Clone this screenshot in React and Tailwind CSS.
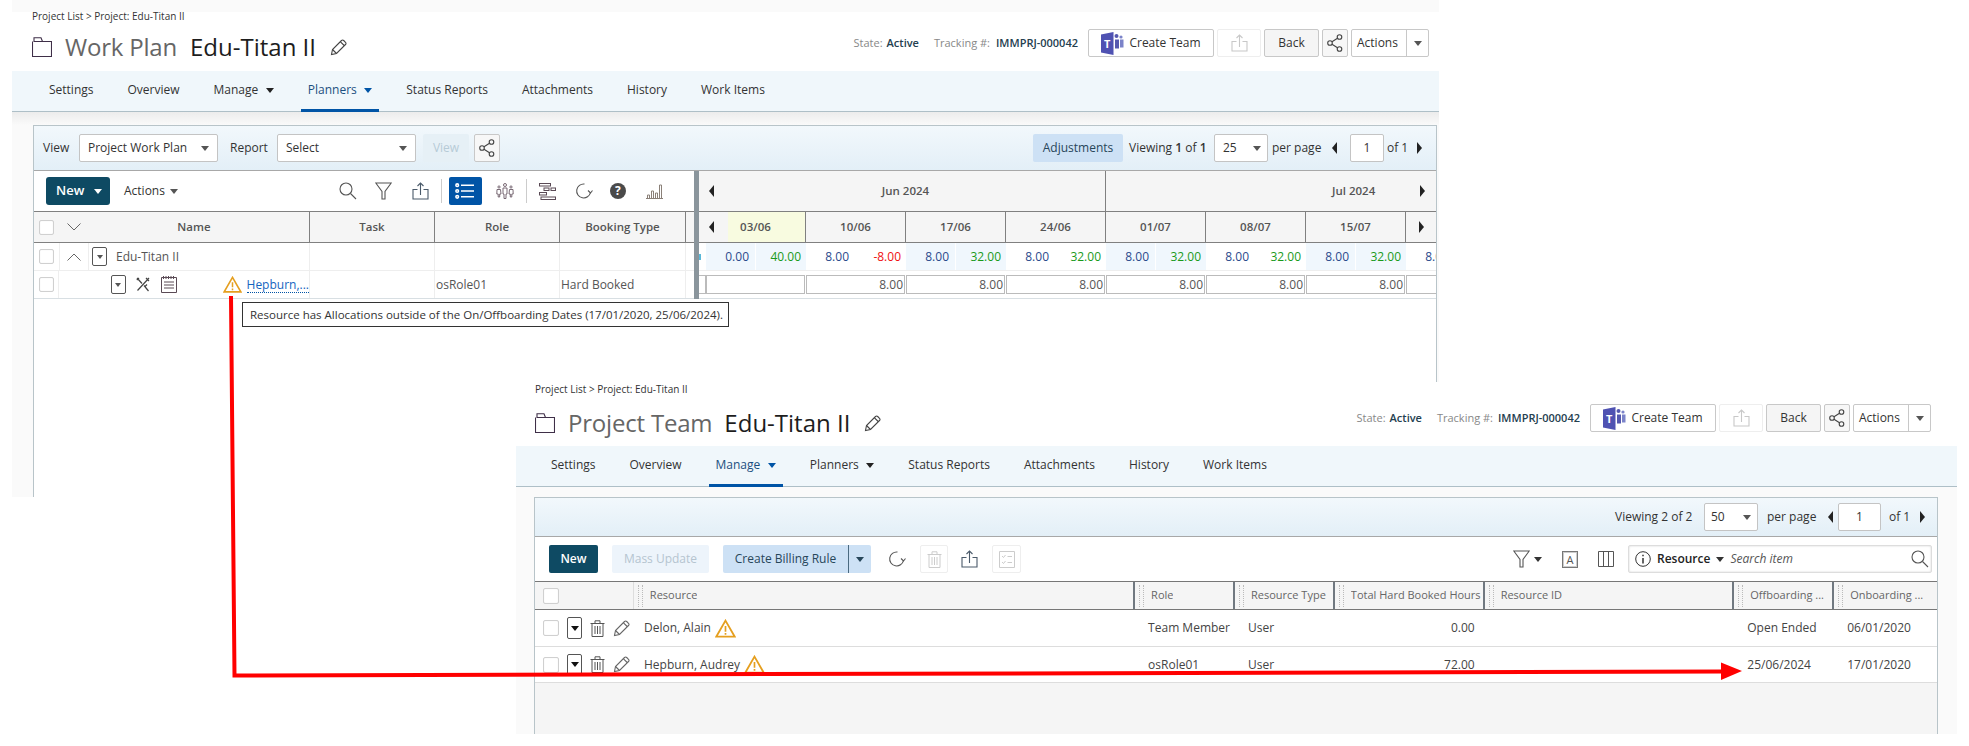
import React from 'react';

const Folder = () => (
  <svg width="20" height="20" viewBox="0 0 20 20" fill="none" stroke="#3f2f48" strokeWidth="1.1">
    <path d="M0.5 4.5V19.5H19.5V4.5H10.5L9 0.8H2V4.5H10.5" />
  </svg>
);

const Pencil = ({ color = '#444' }) => (
  <svg width="17" height="17" viewBox="0 0 17 17" fill="none" stroke={color} strokeWidth="1.1">
    <path d="M1.5 15.5L2.5 10.5L11.5 1.5C12.3 0.8 13 0.8 13.7 1.5L15.5 3.3C16.2 4 16.2 4.8 15.5 5.5L6.5 14.5L1.5 15.5Z" />
    <path d="M10.5 2.8L14.2 6.5M2.5 10.5L6.5 14.5" />
  </svg>
);

const Nodes = () => (
  <svg width="16" height="18" viewBox="0 0 16 18" fill="none" stroke="#444" strokeWidth="1.1">
    <circle cx="12.5" cy="3" r="2.3" />
    <circle cx="3" cy="9" r="2.3" />
    <circle cx="12.5" cy="15" r="2.3" />
    <path d="M10.5 4.3L5 7.7M5 10.3L10.5 13.7" />
  </svg>
);

const Upload = ({ color = '#4a5a6a' }) => (
  <svg width="17" height="18" viewBox="0 0 17 18" fill="none" stroke={color} strokeWidth="1.1">
    <path d="M5.5 7.5H1V17H16V7.5H11.5" />
    <path d="M8.5 13V1M5.5 4L8.5 1L11.5 4" />
  </svg>
);

const Teams = () => (
  <svg width="23" height="23" viewBox="0 0 23 23">
    <circle cx="15.5" cy="4" r="2" fill="#5558af" />
    <circle cx="20" cy="5" r="1.6" fill="#7b83c9" />
    <rect x="14" y="7.5" width="4" height="9" fill="#5558af" />
    <rect x="19" y="7.5" width="3.5" height="8" fill="#7b83c9" />
    <path d="M0 2.5L12.5 0V23L0 20.5Z" fill="#4f52b2" />
    <text x="6.2" y="15.5" fontSize="11" fontWeight="700" fill="#fff" textAnchor="middle" fontFamily="Open Sans">T</text>
  </svg>
);

const Down = ({ className = 'border-t-[#555]', w = 'border-x-[4px] border-t-[5px]' }) => (
  <span className={`inline-block h-0 w-0 border-x-transparent ${w} ${className}`} />
);

const ArrowL = () => <span className="inline-block h-0 w-0 border-y-[6px] border-r-[5px] border-y-transparent border-r-[#222]" />;
const ArrowR = () => <span className="inline-block h-0 w-0 border-y-[6px] border-l-[5px] border-y-transparent border-l-[#222]" />;

const Warn = ({ w = 19, h = 17 }) => (
  <svg width={w} height={h} viewBox="0 0 20 18" fill="none">
    <path d="M10 1.5L18.8 16.8H1.2Z" stroke="#e59f1f" strokeWidth="1.7" strokeLinejoin="miter" />
    <path d="M10 6.5V12M10 13.2V15" stroke="#e59f1f" strokeWidth="1.6" />
  </svg>
);

const Search = () => (
  <svg width="18" height="18" viewBox="0 0 18 18" fill="none" stroke="#555" strokeWidth="1.1">
    <circle cx="7" cy="7" r="6" />
    <path d="M11.5 11.5L17 17" />
  </svg>
);

const Funnel = () => (
  <svg width="17" height="18" viewBox="0 0 17 18" fill="none" stroke="#555" strokeWidth="1.1">
    <path d="M0.8 1H16.2L10 9.5V17H7V9.5Z" />
  </svg>
);

const Refresh = () => (
  <svg width="18" height="18" viewBox="0 0 18 18" fill="none" stroke="#555" strokeWidth="1.1">
    <path d="M15.5 10.5A7 7 0 1 1 9.5 2" />
    <path d="M13 8.5L15.5 11L17.5 8.5" />
  </svg>
);

const Trash = ({ color = '#555', w = 15, h = 17 }) => (
  <svg width={w} height={h} viewBox="0 0 15 17" fill="none" stroke={color} strokeWidth="1">
    <path d="M0.5 3.5H14.5M2 3.5V16.5H13V3.5M5 3.5V0.8H10V3.5M5 6V14M7.5 6V14M10 6V14" />
  </svg>
);

const ListIcon = () => (
  <svg width="20" height="16" viewBox="0 0 20 16" fill="none" stroke="#fff" strokeWidth="1.6">
    <circle cx="2.2" cy="2.2" r="1.3" />
    <circle cx="2.2" cy="8" r="1.3" />
    <circle cx="2.2" cy="13.8" r="1.3" />
    <path d="M6 2.2H19M6 8H19M6 13.8H19" />
  </svg>
);

const People = () => (
  <svg width="18" height="16" viewBox="0 0 18 16" fill="none" stroke="#6b5a66" strokeWidth="0.9">
    <circle cx="9" cy="2" r="1.5" />
    <path d="M7 5H11V11H10V15.5H8V11H7Z" />
    <circle cx="3" cy="4" r="1.1" />
    <path d="M1 6.5H4.5L5 11H3.7V14H2.2V11H0.8Z" />
    <circle cx="15" cy="4" r="1.1" />
    <path d="M13.5 6.5H17L17.2 11H15.8V14H14.3V11H13Z" />
  </svg>
);

const Gantt = () => (
  <svg width="17" height="17" viewBox="0 0 17 17" fill="none" stroke="#5a4a55" strokeWidth="1">
    <rect x="0.5" y="0.5" width="11" height="2.5" />
    <rect x="5" y="5" width="5" height="2.5" />
    <rect x="12" y="5" width="4.5" height="2.5" />
    <rect x="0.5" y="9.5" width="7" height="2.5" />
    <rect x="2" y="14" width="14.5" height="2.5" />
  </svg>
);

const Help = () => (
  <span className="flex h-[16px] w-[16px] items-center justify-center rounded-full bg-[#4a4a4a] text-[12px] leading-none font-bold text-white">?</span>
);

const Bars = () => (
  <svg width="17" height="15" viewBox="0 0 17 15" fill="none" stroke="#8a8078" strokeWidth="1">
    <path d="M0 14.5H17M1.5 14.5V11H3.5V14.5M5.5 14.5V7H7.5V14.5M9.5 14.5V9H11.5V14.5M13.5 14.5V1H15.5V14.5" />
  </svg>
);

const Tools = () => (
  <svg width="14" height="15" viewBox="0 0 14 15" fill="none" stroke="#444" strokeWidth="1.2">
    <path d="M1 1L6 6.5M8 8.5L12.5 14M13 1L1.5 13.5M10 1L13 4M0.8 3L3 1M9 9.5L11 7.5" />
  </svg>
);

const Notes = () => (
  <svg width="16" height="17" viewBox="0 0 16 17" fill="none" stroke="#5a4a55" strokeWidth="1">
    <path d="M0.5 1.5H15.5V16.5H0.5ZM2.5 0V3M5 0V3M7.5 0V3M10 0V3M12.5 0V3M3 6H13M3 9H13M3 12H13" />
  </svg>
);

const Check = ({ className = '' }) => (
  <span className={`inline-block h-[15px] w-[15px] rounded-[2px] border border-[#d0d0d0] bg-white shadow-[inset_0_0_1px_#ddd] ${className}`} />
);

const Select = ({ label, className }) => (
  <div className={`flex h-[28px] items-center justify-between rounded-[2px] border border-[#c4c4c4] bg-white text-[#333] ${className}`}>
    <span>{label}</span>
    <Down w="border-x-[4.5px] border-t-[5px]" />
  </div>
);

const SmallBtn = ({ className, children }) => (
  <div className={`flex h-[28px] items-center justify-center rounded-[2px] border ${className}`}>{children}</div>
);

const PageHeader = ({ title, titleGap, leftPad, rightPad, top, rowGap, btnOffset, stateMargin }) => (
  <div className={`h-full bg-white ${top}`}>
    <div className={`h-[12px] text-[10px] leading-[9px] text-[#333] ${leftPad}`}>Project List &gt; Project: Edu-Titan II</div>
    <div className={`flex items-start justify-between ${rowGap} ${leftPad} ${rightPad}`}>
      <div className="flex h-[28px] items-center">
        <Folder />
        <span className="ml-[13px] text-[24px] leading-none tracking-[-0.2px] text-[#666]">{title}</span>
        <span className={`text-[24px] leading-none text-[#1d1d1d] ${titleGap}`}>Edu-Titan II</span>
        <span className="ml-[14px]"><Pencil /></span>
      </div>
      <div className={`flex items-center text-[11px] ${btnOffset}`}>
        <span className="text-[#888]">State:</span>
        <span className="ml-[4px] font-semibold text-[#24404f]">Active</span>
        <span className="ml-[15px] text-[#888]">Tracking #:</span>
        <span className={`font-semibold text-[#24404f] ${stateMargin}`}>IMMPRJ-000042</span>
        <SmallBtn className="ml-[10px] w-[126px] border-[#c8c8c8] bg-white text-[12px] text-[#333]">
          <Teams />
          <span className="ml-[5px]">Create Team</span>
        </SmallBtn>
        <SmallBtn className="ml-[3px] w-[44px] border-[#eee] bg-white"><Upload color="#c8c8c8" /></SmallBtn>
        <SmallBtn className="ml-[3px] w-[55px] border-[#c8c8c8] bg-[#f5f5f5] text-[12px] text-[#333]">Back</SmallBtn>
        <SmallBtn className="ml-[3px] w-[26px] border-[#c8c8c8] bg-[#f7f7f7]"><Nodes /></SmallBtn>
        <div className="ml-[3px] flex h-[28px] w-[78px] items-center rounded-[2px] border border-[#c8c8c8] bg-white text-[12px] text-[#333]">
          <span className="w-[55px] border-r border-[#c8c8c8] pl-[5px] leading-[26px]">Actions</span>
          <span className="flex flex-1 justify-center"><Down /></span>
        </div>
      </div>
    </div>
  </div>
);

const Tabs = ({ active, className }) => {
  const tabs = [
    { name: 'Settings' },
    { name: 'Overview' },
    { name: 'Manage', caret: true },
    { name: 'Planners', caret: true },
    { name: 'Status Reports' },
    { name: 'Attachments' },
    { name: 'History' },
    { name: 'Work Items' },
  ];
  return (
    <div className={`flex h-[41px] gap-[20px] border-b border-[#aebfc7] bg-[#f0f7fb] text-[12px] text-[#333] ${className}`}>
      {tabs.map((t) => (
        <div
          key={t.name}
          className={`-mb-px flex items-center gap-[7.5px] px-[7px] ${t.name === active ? 'border-b-[3px] border-[#0054a6] text-[#1c4f80]' : 'pb-[3px]'}`}
        >
          <span>{t.name}</span>
          {t.caret && <Down className={t.name === active ? 'border-t-[#0054a6]' : 'border-t-[#222]'} />}
        </div>
      ))}
    </div>
  );
};

const weeks = ['03/06', '10/06', '17/06', '24/06', '01/07', '08/07', '15/07'];
const hours = [
  ['0.00', '40.00'],
  ['8.00', '-8.00'],
  ['8.00', '32.00'],
  ['8.00', '32.00'],
  ['8.00', '32.00'],
  ['8.00', '32.00'],
  ['8.00', '32.00'],
  ['8.00', ''],
];

const WorkPlan = () => (
  <div className="absolute top-0 left-[12px] flex h-[497px] w-[1427px] flex-col bg-[#fafafa] pt-[12px]">
    <div className="h-[59px] shrink-0">
      <PageHeader
        title="Work Plan"
        titleGap="ml-[13px]"
        leftPad="pl-[20px]"
        rightPad="pr-[10px]"
        top=""
        rowGap="mt-[9px]"
        btnOffset="-mt-[4px]"
        stateMargin="ml-[6px]"
      />
    </div>
    <Tabs active="Planners" className="pl-[30px]" />
    <div className="h-[13px] shrink-0 bg-gradient-to-b from-[#ececec] to-[#fafafa]" />
    <div className="ml-[21px] flex w-[1404px] flex-1 flex-col border-x border-t border-[#b8c4c9] bg-white text-[12px]">
      <div className="flex h-[45px] shrink-0 items-center border-b border-[#a8a8a8] bg-gradient-to-b from-[#f2f8fc] to-[#e3eff7] pl-[9px] text-[#333]">
        <span className="w-[36px]">View</span>
        <Select label="Project Work Plan" className="w-[139px] px-[8px]" />
        <span className="w-[59px] pl-[12px]">Report</span>
        <Select label="Select" className="w-[139px] px-[8px]" />
        <SmallBtn className="ml-[7px] w-[46px] border-transparent bg-[#e6f0f6] text-[#b6cbd6]">View</SmallBtn>
        <SmallBtn className="ml-[5px] w-[26px] border-[#c8c8c8] bg-[#f7f7f7]"><Nodes /></SmallBtn>
        <div className="ml-auto flex items-center pr-[14px]">
          <SmallBtn className="w-[90px] border-transparent bg-[#cde1f5] text-[#27465a]">Adjustments</SmallBtn>
          <span className="ml-[6px] w-[85px]">Viewing <b className="font-semibold">1</b> of <b className="font-semibold">1</b></span>
          <Select label="25" className="w-[54px] pr-[6px] pl-[8px]" />
          <span className="ml-[4px] w-[50px]">per page</span>
          <span className="ml-[10px] flex"><ArrowL /></span>
          <div className="ml-[13px] flex h-[28px] w-[34px] items-center justify-center rounded-[2px] border border-[#c4c4c4] bg-white">1</div>
          <span className="ml-[3px] w-[26px]">of 1</span>
          <span className="ml-[4px] flex"><ArrowR /></span>
        </div>
      </div>
      <div className="flex">
        <div className="w-[660px] shrink-0">
          <div className="flex h-[40px] items-center pl-[12px]">
            <div className="flex h-[28px] w-[64px] items-center rounded-[3px] bg-[#0e4a63] pl-[10px] text-[13px] font-semibold text-white">
              New
              <span className="ml-[10px] flex"><Down className="border-t-white" /></span>
            </div>
            <span className="ml-[14px] text-[#333]">Actions</span>
            <span className="ml-[5px] flex"><Down /></span>
            <span className="ml-[161px] flex"><Search /></span>
            <span className="ml-[18px] flex"><Funnel /></span>
            <span className="ml-[20px] flex"><Upload /></span>
            <span className="ml-[12px] h-[24px] w-px bg-[#ccc]" />
            <div className="ml-[7px] flex h-[28px] w-[33px] items-center justify-center rounded-[2px] bg-[#0054a6]"><ListIcon /></div>
            <span className="ml-[14px] flex"><People /></span>
            <span className="ml-[12px] h-[24px] w-px bg-[#ccc]" />
            <span className="ml-[12px] flex"><Gantt /></span>
            <span className="ml-[19px] flex"><Refresh /></span>
            <span className="ml-[17px] flex"><Help /></span>
            <span className="ml-[20px] flex"><Bars /></span>
          </div>
          <div className="flex h-[32px] border-y border-[#808080] bg-[#f5f5f5] text-[11.5px] font-semibold text-[#555]">
            <div className="relative flex w-[276px] items-center border-r border-[#808080]">
              <Check className="ml-[5px]" />
              <svg className="ml-[13px]" width="14" height="8" viewBox="0 0 14 8" fill="none" stroke="#666"><path d="M0.5 0.5L7 7L13.5 0.5" /></svg>
              <span className="ml-[68px] w-[90px] text-center">Name</span>
            </div>
            <div className="flex w-[125px] items-center justify-center border-r border-[#808080]">Task</div>
            <div className="flex w-[125px] items-center justify-center border-r border-[#808080]">Role</div>
            <div className="flex w-[126px] items-center justify-center border-r border-[#808080]">Booking Type</div>
          </div>
          <div className="flex h-[28px] border-b border-[#eee] text-[#555]">
            <div className="flex w-[276px] items-center border-r border-[#eee]">
              <span className="flex h-full w-[26px] items-center border-r border-[#eee]"><Check className="ml-[5px]" /></span>
              <span className="flex h-full w-[29px] items-center justify-center border-r border-[#eee]">
                <svg width="14" height="8" viewBox="0 0 14 8" fill="none" stroke="#666"><path d="M0.5 7.5L7 1L13.5 7.5" /></svg>
              </span>
              <span className="ml-[3px] flex h-[19px] w-[15px] items-center justify-center rounded-[2px] border border-[#555]"><Down w="border-x-[3px] border-t-[4px]" /></span>
              <span className="ml-[9px]">Edu-Titan II</span>
            </div>
            <div className="w-[125px] border-r border-[#eee]" />
            <div className="w-[125px] border-r border-[#eee]" />
            <div className="w-[126px] border-r border-[#eee]" />
          </div>
          <div className="flex h-[28px] border-b border-[#d8dfe3] text-[#555]">
            <div className="flex w-[276px] items-center border-r border-[#eee]">
              <span className="flex h-full w-[26px] items-center border-r border-[#eee]"><Check className="ml-[5px]" /></span>
              <span className="ml-[52px] flex h-[19px] w-[15px] items-center justify-center rounded-[2px] border border-[#555]"><Down w="border-x-[3px] border-t-[4px]" /></span>
              <span className="ml-[10px] flex"><Tools /></span>
              <span className="ml-[11px] flex"><Notes /></span>
              <span className="ml-[46px] flex"><Warn /></span>
              <span className="ml-[5px] border-b border-dotted border-[#0054a6] leading-[15px] text-[#1565c0]">Hepburn,...</span>
            </div>
            <div className="w-[125px] border-r border-[#eee]" />
            <div className="flex w-[125px] items-center border-r border-[#eee] pl-[1px]">osRole01</div>
            <div className="flex w-[126px] items-center border-r border-[#eee] pl-[1px]">Hard Booked</div>
          </div>
        </div>
        <div className="w-[5px] shrink-0 bg-[#8a959c]" />
        <div className="w-[737px] overflow-hidden text-[#555]">
          <div className="flex h-[40px] bg-[#f5f5f5] pl-[7px] text-[11.5px] font-semibold">
            <div className="relative flex w-[400px] shrink-0 items-center justify-center border-r border-[#808080]">
              Jun 2024
              <span className="absolute left-[3px] flex"><ArrowL /></span>
            </div>
            <div className="relative flex flex-1 items-center pl-[226px]">
              Jul 2024
              <span className="absolute right-[11px] flex"><ArrowR /></span>
            </div>
          </div>
          <div className="flex h-[32px] border-y border-[#808080] bg-[#f5f5f5] pl-[7px] text-[11.5px] font-semibold">
            {weeks.map((w, i) => (
              <div key={w} className={`relative flex w-[100px] shrink-0 items-center justify-center border-r border-[#808080] ${i === 0 ? 'bg-[#f8fbe0]' : ''}`}>
                {i === 0 && <span className="absolute inset-y-0 left-0 flex w-[22px] items-center bg-[#f5f5f5] pl-[3px]"><ArrowL /></span>}
                {w}
              </div>
            ))}
            <div className="flex flex-1 items-center pl-[13px]"><ArrowR /></div>
          </div>
          <div className="flex h-[28px] border-b border-[#eee]">
            <span className="flex w-[7px] shrink-0 items-center"><span className="h-[6px] w-[2px] bg-[#5ab8d8]" /></span>
            {hours.map((h, i) => (
              <div key={i} className={`flex w-[100px] shrink-0 items-center ${i % 2 === 0 ? 'bg-[#f0f7fd]' : 'bg-white'}`}>
                <span className="h-full w-[50px] border-r border-white pr-[6px] text-right leading-[27px] text-[#2a4a8c]">{h[0]}</span>
                <span className={`w-[50px] pr-[5px] text-right ${h[1].startsWith('-') ? 'text-[#f01010]' : 'text-[#1a9a1a]'}`}>{h[1]}</span>
              </div>
            ))}
          </div>
          <div className="flex h-[28px] items-start border-b border-[#d8dfe3] pt-[4px]">
            <span className="h-[19px] w-[7px] shrink-0 border border-l-0 border-[#bbb]" />
            {weeks.concat('x').map((w, i) => (
              <span key={w} className="mr-px h-[19px] w-[99px] shrink-0 border border-[#bbb] pr-[1px] text-right leading-[17px]">
                {i === 0 || i === 7 ? '' : '8.00'}
              </span>
            ))}
          </div>
        </div>
      </div>
    </div>
  </div>
);

const TeamHead = ({ label, className, last }) => (
  <div className={`relative flex h-full items-center pl-[16px] ${className}`}>
    <span className="absolute top-[3px] left-[4px] h-[22px] w-[5px] border-x border-dotted border-[#bbb]" />
    <span className="truncate">{label}</span>
    {!last && <span className="absolute inset-y-0 right-0 w-[2px] bg-[#707880]" />}
  </div>
);

const RowIcons = () => (
  <>
    <Check className="ml-[8px] h-[16px] w-[16px]" />
    <span className="ml-[8px] flex h-[22px] w-[15px] items-center justify-center rounded-[2px] border border-[#555]"><Down className="border-t-[#111]" /></span>
    <span className="ml-[8px] flex"><Trash /></span>
    <span className="ml-[8px] flex"><Pencil color="#666" /></span>
  </>
);

const TeamRow = ({ name, role, total, off, on, height, warnGap }) => (
  <div className={`flex border-b border-[#ddd] bg-white text-[#444] ${height}`}>
    <div className="flex w-[601px] items-center">
      <RowIcons />
      <span className="ml-[14px]">{name}</span>
      <span className={`flex ${warnGap}`}><Warn w={21} h={19} /></span>
    </div>
    <div className="flex w-[100px] items-center pl-[13px]">{role}</div>
    <div className="flex w-[100px] items-center pl-[13px]">User</div>
    <div className="flex w-[150px] items-center justify-end pr-[10px]">{total}</div>
    <div className="w-[250px]" />
    <div className="flex w-[100px] items-center pl-[13px]">{off}</div>
    <div className="flex w-[103px] items-center pl-[13px]">{on}</div>
  </div>
);

const ProjectTeam = () => (
  <div className="absolute top-[382px] left-[516px] z-10 flex h-[352px] w-[1441px] flex-col bg-[#fafafa]">
    <div className="h-[64px] shrink-0">
      <PageHeader
        title="Project Team"
        titleGap="ml-[12px]"
        leftPad="pl-[19px]"
        rightPad="pr-[26px]"
        top="pt-[3px]"
        rowGap="mt-[12px]"
        btnOffset="-mt-[5px]"
        stateMargin="ml-[5px]"
      />
    </div>
    <Tabs active="Manage" className="pl-[28px]" />
    <div className="h-[10px] shrink-0" />
    <div className="ml-[18px] flex w-[1404px] flex-1 flex-col border-x border-t border-[#b8c4c9] bg-[#f5f5f5] text-[12px]">
      <div className="flex h-[39px] shrink-0 items-center justify-end border-b border-[#a8a8a8] bg-gradient-to-b from-[#f2f8fc] to-[#e3eff7] pr-[12px] text-[#333]">
        <span className="w-[89px]">Viewing 2 of 2</span>
        <Select label="50" className="w-[54px] pr-[6px] pl-[6px]" />
        <span className="ml-[9px] w-[53px]">per page</span>
        <span className="ml-[8px] flex"><ArrowL /></span>
        <div className="ml-[5px] flex h-[28px] w-[43px] items-center justify-center rounded-[2px] border border-[#c4c4c4] bg-white">1</div>
        <span className="ml-[8px] w-[28px]">of 1</span>
        <span className="ml-[3px] flex"><ArrowR /></span>
      </div>
      <div className="flex h-[44px] shrink-0 items-center bg-white pl-[14px]">
        <SmallBtn className="w-[49px] border-transparent bg-[#0e4a63] font-semibold text-white">New</SmallBtn>
        <SmallBtn className="ml-[14px] w-[97px] border-transparent bg-[#edf4fb] text-[#b5c4d0]">Mass Update</SmallBtn>
        <div className="ml-[14px] flex h-[28px] w-[148px] items-center rounded-[2px] bg-[#cde1f5] text-[#27465a]">
          <span className="w-[126px] border-r border-[#4a6a80] text-center leading-[28px]">Create Billing Rule</span>
          <span className="flex flex-1 justify-center"><Down className="border-t-[#27465a]" /></span>
        </div>
        <span className="ml-[17px] flex"><Refresh /></span>
        <SmallBtn className="ml-[14px] w-[28px] border-[#eee] bg-white"><Trash color="#ccc" /></SmallBtn>
        <span className="ml-[13px] flex"><Upload /></span>
        <SmallBtn className="ml-[14px] w-[29px] border-[#eee] bg-white">
          <svg width="16" height="17" viewBox="0 0 16 17" fill="none" stroke="#ccc"><path d="M0.5 0.5H15.5V16.5H0.5ZM3 5L4.5 6.5L6.5 4M8.5 5.5H13M3 11L4.5 12.5L6.5 10M8.5 11.5H13" /></svg>
        </SmallBtn>
        <span className="ml-[492px] flex"><Funnel /></span>
        <span className="ml-[4px] flex"><Down className="border-t-[#333]" /></span>
        <span className="ml-[20px] flex h-[17px] w-[16px] items-center justify-center border border-[#777] text-[11px] leading-none text-[#555] shadow-[inset_0_0_0_1px_#ccc]">A</span>
        <svg className="ml-[20px]" width="16" height="16" viewBox="0 0 16 16" fill="none" stroke="#555"><path d="M0.5 0.5H15.5V15.5H0.5ZM5.5 0.5V15.5M10.5 0.5V15.5" /></svg>
        <div className="ml-[14px] flex h-[28px] w-[304px] items-center rounded-[2px] border border-[#ddd] bg-white pr-[2px] pl-[6px] shadow-[inset_0_0_2px_#ccc]">
          <svg width="16" height="16" viewBox="0 0 16 16" fill="none" stroke="#333"><circle cx="8" cy="8" r="7.3" /><path d="M8 7V12.5M8 3.8V5.3" strokeWidth="1.5" /></svg>
          <span className="ml-[6px] font-semibold text-[#222]">Resource</span>
          <span className="ml-[6px] flex"><Down className="border-t-[#333]" /></span>
          <span className="ml-[6px] text-[#555] italic">Search item</span>
          <span className="ml-auto flex"><Search /></span>
        </div>
      </div>
      <div className="flex h-[29px] shrink-0 border-y border-[#777] bg-[#f5f5f5] text-[11px] text-[#666]">
        <div className="flex h-full w-[99px] items-center border-r border-[#ddd]"><Check className="ml-[8px] h-[16px] w-[16px]" /></div>
        <TeamHead label="Resource" className="w-[502px]" />
        <TeamHead label="Role" className="w-[100px]" />
        <TeamHead label="Resource Type" className="w-[100px]" />
        <TeamHead label="Total Hard Booked Hours" className="w-[150px]" />
        <TeamHead label="Resource ID" className="w-[250px]" />
        <TeamHead label="Offboarding ..." className="w-[100px]" />
        <TeamHead label="Onboarding ..." className="w-[103px]" last />
      </div>
      <TeamRow name="Delon, Alain" role="Team Member" total="0.00" off="Open Ended" on="06/01/2020" height="h-[37px]" warnGap="ml-[4px]" />
      <TeamRow name="Hepburn, Audrey" role="osRole01" total="72.00" off="25/06/2024" on="17/01/2020" height="h-[36px]" warnGap="ml-[4px]" />
    </div>
  </div>
);

export default function App() {
  return (
    <div className="relative h-[746px] w-[1969px] overflow-hidden bg-white font-['Open_Sans',sans-serif]">
      <WorkPlan />
      <ProjectTeam />
      {/* tooltip */}
      <div className="absolute top-[302px] left-[242px] z-10 flex h-[25px] w-[487px] items-center border border-[#333] bg-white pl-[7px] text-[11.5px] whitespace-nowrap text-[#333]">
        Resource has Allocations outside of the On/Offboarding Dates (17/01/2020, 25/06/2024).
      </div>
      {/* red callout arrow */}
      <svg className="pointer-events-none absolute inset-0 z-20" width="1969" height="746" viewBox="0 0 1969 746" fill="none">
        <path d="M231 296L234.5 675.5L1724 671.5" stroke="#ff0000" strokeWidth="4" />
        <path d="M1721 662.5L1742 671L1721 680Z" fill="#ff0000" />
      </svg>
    </div>
  );
}
